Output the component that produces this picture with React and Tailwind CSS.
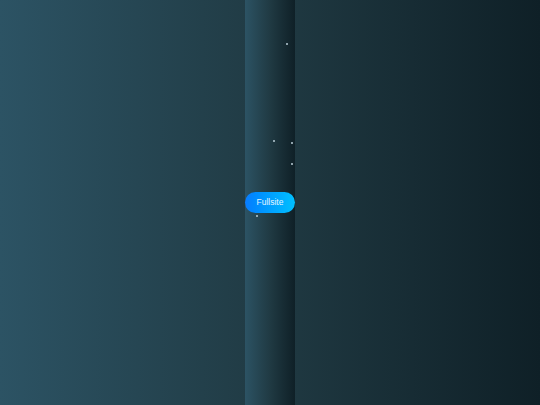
export default function App() {
  const stars = [
    { x: 41, y: 43, s: 2 },
    { x: 28, y: 140, s: 1.5 },
    { x: 46, y: 142, s: 2 },
    { x: 46, y: 163, s: 2 },
    { x: 11, y: 215, s: 1.5 },
  ];
  return (
    <div className="h-[405px] w-full bg-gradient-to-r from-[#2c5364] via-[#203a43] to-[#0f2027] flex justify-center font-['Liberation_Sans',Arial,sans-serif]">
      <div className="relative w-[50px] h-full bg-gradient-to-r from-[#2c5364] via-[#203a43] to-[#0f2027] flex items-center justify-center">
        {stars.map((st, i) => (
          <span
            key={i}
            className="absolute rounded-full bg-[#b8ccd6]"
            style={{ left: st.x, top: st.y, width: st.s, height: st.s }}
          />
        ))}
        <button className="w-[50px] h-[21px] rounded-full bg-gradient-to-r from-[#0a7cff] to-[#00c0ff] text-[#e6f4ff] text-[8.5px] leading-none">
          Fullsite
        </button>
      </div>
    </div>
  );
}
